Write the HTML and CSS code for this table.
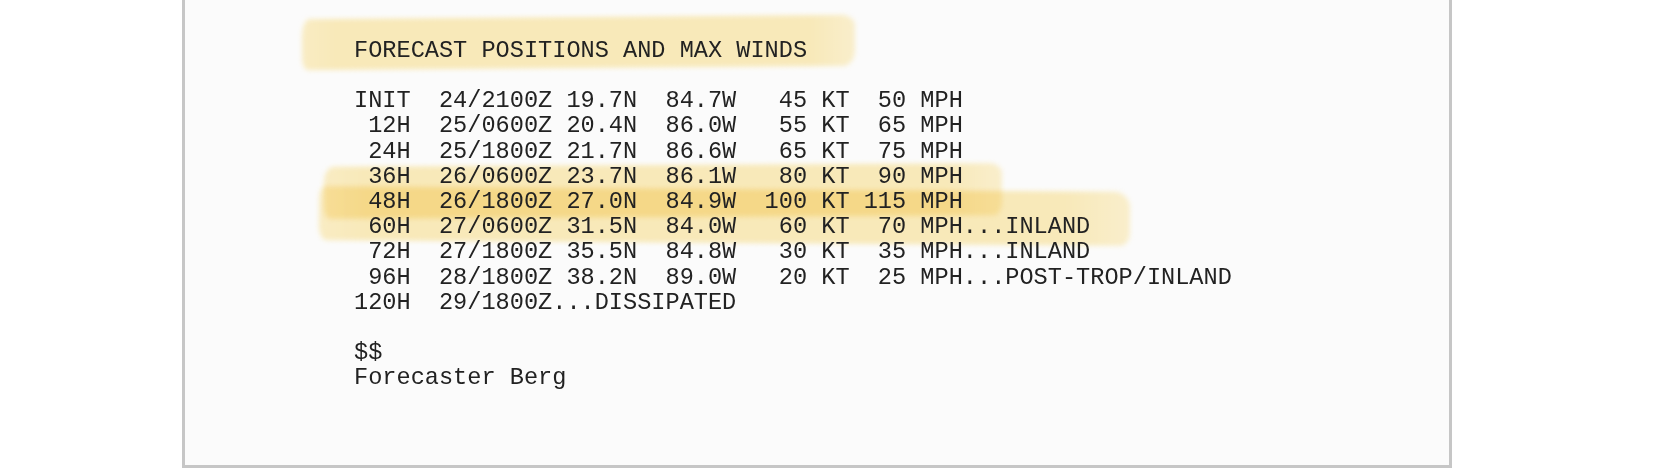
FILE: index.html
```html
<!DOCTYPE html>
<html lang="en">
<head>
<meta charset="utf-8">
<title>Forecast Positions and Max Winds</title>
<link rel="stylesheet" href="styles.css">
</head>
<body>
<main class="page">
  <section class="sheet">
    <div class="bulletin">
      <div class="mark mark-title"></div>
      <div class="mark mark-a"></div>
      <div class="mark mark-b"></div>
<pre class="text">FORECAST POSITIONS AND MAX WINDS

INIT  24/2100Z 19.7N  84.7W   45 KT  50 MPH
 12H  25/0600Z 20.4N  86.0W   55 KT  65 MPH
 24H  25/1800Z 21.7N  86.6W   65 KT  75 MPH
 36H  26/0600Z 23.7N  86.1W   80 KT  90 MPH
 48H  26/1800Z 27.0N  84.9W  100 KT 115 MPH
 60H  27/0600Z 31.5N  84.0W   60 KT  70 MPH...INLAND
 72H  27/1800Z 35.5N  84.8W   30 KT  35 MPH...INLAND
 96H  28/1800Z 38.2N  89.0W   20 KT  25 MPH...POST-TROP/INLAND
120H  29/1800Z...DISSIPATED

$$
Forecaster Berg</pre>
    </div>
  </section>
</main>
</body>
</html>
```

FILE: styles.css
```css
html, body {
  margin: 0;
  padding: 0;
  background: #ffffff;
}

.page {
  width: 1668px;
  height: 469px;
  overflow: hidden;
}

.sheet {
  box-sizing: border-box;
  margin-left: 182px;
  width: 1270px;
  height: 468px;
  background: #fbfbfb;
  border: 3px solid #c6c6c6;
  border-top: none;
  padding: 37.7px 0 0 169px;
}

.bulletin {
  position: relative;
}

.text {
  position: relative;
  margin: 0;
  font-family: "Liberation Mono", "DejaVu Sans Mono", monospace;
  font-size: 23.6px;
  line-height: 25.2px;
  color: #222222;
}

.mark {
  position: absolute;
  background: linear-gradient(90deg, #fdf0c6 0%, #fcedbc 6%, #fcedbc 92%, #fdf2cf 100%);
  mix-blend-mode: multiply;
  filter: blur(2.6px);
}

.mark-title {
  left: -52px;
  top: -21px;
  width: 553px;
  height: 51px;
  border-radius: 8px 14px 12px 6px / 18px 10px 16px 12px;
  transform: rotate(-0.45deg);
}

.mark-a {
  left: -30px;
  top: 127px;
  width: 678px;
  height: 52px;
  border-radius: 10px 12px 8px 6px / 16px 10px 14px 12px;
  transform: rotate(-0.3deg);
}

.mark-b {
  left: -35px;
  top: 151px;
  width: 811px;
  height: 54px;
  border-radius: 6px 16px 10px 8px / 12px 16px 12px 14px;
  transform: rotate(0.4deg);
}
```
